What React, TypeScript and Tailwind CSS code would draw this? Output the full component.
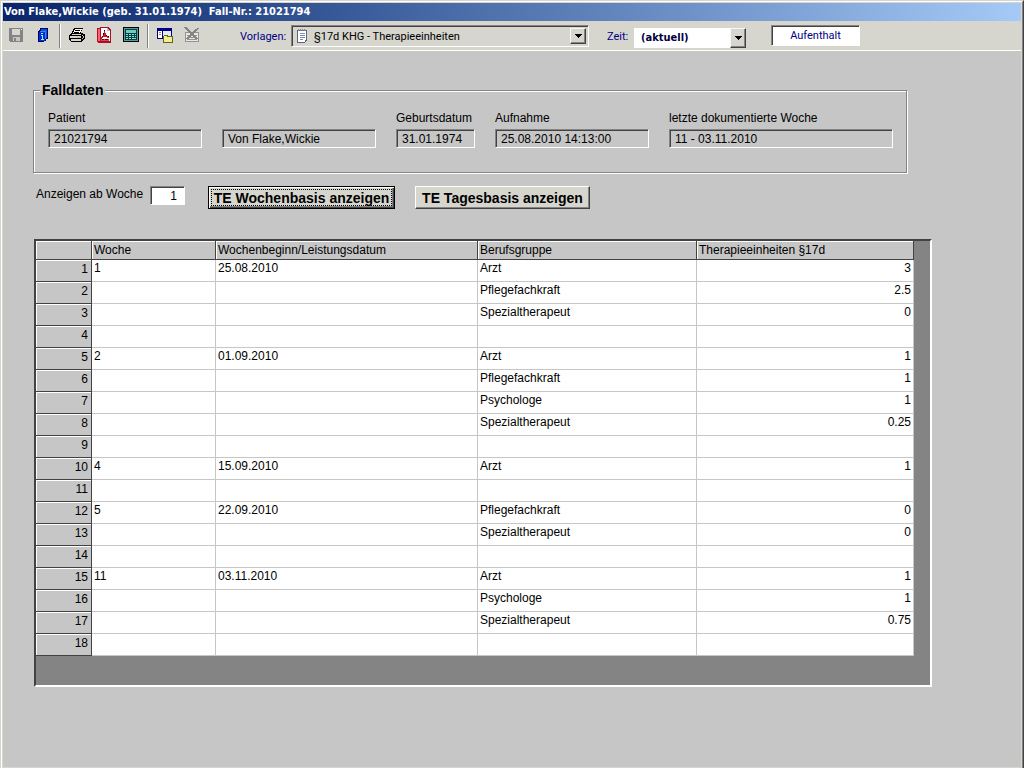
import React, { useState } from 'react';
import clsx from 'clsx';

interface TherapyRow {
  week?: string;
  date?: string;
  group?: string;
  units?: string;
}

const rows: TherapyRow[] = [
  { week: '1', date: '25.08.2010', group: 'Arzt', units: '3' },
  { group: 'Pflegefachkraft', units: '2.5' },
  { group: 'Spezialtherapeut', units: '0' },
  {},
  { week: '2', date: '01.09.2010', group: 'Arzt', units: '1' },
  { group: 'Pflegefachkraft', units: '1' },
  { group: 'Psychologe', units: '1' },
  { group: 'Spezialtherapeut', units: '0.25' },
  {},
  { week: '4', date: '15.09.2010', group: 'Arzt', units: '1' },
  {},
  { week: '5', date: '22.09.2010', group: 'Pflegefachkraft', units: '0' },
  { group: 'Spezialtherapeut', units: '0' },
  {},
  { week: '11', date: '03.11.2010', group: 'Arzt', units: '1' },
  { group: 'Psychologe', units: '1' },
  { group: 'Spezialtherapeut', units: '0.75' },
  {}
];

const Icon: React.FC<{ children: React.ReactNode }> = ({ children }) => (
  <svg viewBox="0 0 16 16" className="size-4" shapeRendering="crispEdges" aria-hidden="true">
    {children}
  </svg>
);

const SaveIcon = () => (
  <Icon>
    <path d="M1 1h14v14H2l-1-1z" fill="#848484" />
    <path d="M4 2h8v6H4z" fill="#d6d6ce" />
    <path d="M5 10h7v4H5z" fill="#c6c6c6" />
    <path d="M6 11h2v3H6z" fill="#848484" />
    <path d="M13 2h1v1h-1z" fill="#fff" />
  </Icon>
);

const InfoIcon = () => (
  <Icon>
    <path d="M5 1h8v11h-2v2H9v1H3V4h1V3h1z" fill="#000063" />
    <path d="M6 2h6v9h-1V4H6z" fill="#1052d6" />
    <path d="M4 5h6v9H4z" fill="#0031ce" />
    <path d="M5 4h6v8h-1V5H5z" fill="#2984ff" />
    <path d="M6 6h2v1H6zM7 8h1v4H7zM6 8h1v1H6zM6 12h3v1H6z" fill="#9ce7ff" />
  </Icon>
);

const PrintIcon = () => (
  <Icon>
    <path d="M5 1h9v1h-1v2h-1v2h2v1h2v5h-1v1h-1v1h-1v1H2v-1H1v-1H0V8h1V7h1V6h1V4h1V2h1z" fill="#000" />
    <path d="M6 2h7v1h-1v2h-1v1H4V5h1V3h1z" fill="#fff" />
    <path d="M6 3h5v1H6zM5 5h5v1H5z" fill="#000" />
    <path d="M3 7h9v1H2V8h1zM1 9h11v2H1zM2 12h10v2H2z" fill="#d6d6ce" />
    <path d="M13 8h1v1h-1zM14 9h1v2h-1zM13 11h1v1h-1z" fill="#c6c6c6" />
    <path d="M8 10h3v1H8z" fill="#c6c65a" />
  </Icon>
);

const PdfIcon = () => (
  <Icon>
    <path d="M1 1h3V0h8l3 3v13H2v-1H1z" fill="#ad1021" />
    <path d="M5 1h6v3h3v10H5z" fill="#fff" />
    <path d="M2 2h2v12H2z" fill="#ff6373" />
    <path d="M11 1l3 3h-3z" fill="#b5b5bd" />
    <path d="M8 3h1v3h1v2h1v1h2v2h-2v-1H7v1H6v1H5v-2h1V9h1V7h1z" fill="#ce1829" />
    <path d="M8 3h1v1H8zM7 6h1v2H7zM6 9h1v1H6zM10 8h1v1h-1zM12 9h1v1h-1z" fill="#31000a" />
    <path d="M5 12h8v2H5z" fill="#de4252" />
    <path d="M6 12h2v1H6zM9 12h3v1H9z" fill="#63000a" />
  </Icon>
);

const CalculatorIcon = () => (
  <Icon>
    <path d="M0 0h16v15H0z" fill="#000" />
    <path d="M1 1h14v13H1z" fill="#5a9c94" />
    <path d="M2 2h12v11H2z" fill="#00424a" />
    <path d="M3 3h10v3H3z" fill="#7bc6bd" />
    <path d="M3 7h2v1H3zM6 7h2v1H6zM9 7h2v1H9zM12 7h1v1h-1zM3 9h2v1H3zM6 9h2v1H6zM9 9h2v1H9zM12 9h1v1h-1zM3 11h2v1H3zM6 11h2v1H6zM9 11h4v1H9z" fill="#94dece" />
  </Icon>
);

const WindowIcon = () => (
  <Icon>
    <path d="M0 1h15v11H0z" fill="#000084" />
    <path d="M1 4h4v7H1z" fill="#fff" />
    <path d="M6 4h8v7H6z" fill="#e7e7f7" />
    <path d="M2 5h2v1H2zM2 7h2v1H2z" fill="#848484" />
    <path d="M6 9h1V8h4v1h5v7H6z" fill="#636321" />
    <path d="M7 9h3v1h5v5H7z" fill="#efef8c" />
  </Icon>
);

const DeleteFormIcon = () => (
  <Icon>
    <path d="M1 5h14v10H1z" fill="#949494" />
    <path d="M2 6h12v8H2z" fill="#e7e7de" />
    <path d="M3 8h10v1H3zM3 10h10v1H3zM3 12h10v1H3z" fill="#949494" />
    <path
      d="M0 0h3v1h1v1h1v1h1v1h1v1h2V4h1V3h1V2h2V1h2v1h-1v1h-1v1h-1v1h-1v1h-1v2h1v1h1v1h1v1h1v1h-3v-1h-1v-1H9V9H7v1H6v1H5v1H2v-1h1v-1h1V9h1V8h1V6H5V5H4V4H3V3H2V2H1V1H0z"
      fill="#848484"
    />
  </Icon>
);

const NoteIcon = () => (
  <svg viewBox="0 0 12 14" className="h-3.5 w-3" shapeRendering="crispEdges" aria-hidden="true">
    <path d="M1 1h10v11h-1v1H9v1H1z" fill="#63637b" />
    <path d="M2 2h8v9H9v2H2z" fill="#fff" />
    <path d="M4 4h5v1H4zM4 6h5v1H4zM4 8h5v1H4zM4 10h3v1H4z" fill="#7b8cad" />
    <path d="M2 0h1v2H2zM4 0h1v2H4zM6 0h1v2H6zM8 0h1v2H8z" fill="#84849c" />
  </svg>
);

const DropArrow = () => (
  <span className="pointer-events-none absolute inset-y-0 right-0 flex w-4 items-center justify-center border border-t-[#f7f7f7] border-l-[#f7f7f7] border-r-[#424242] border-b-[#424242] bg-[#d6d6ce] shadow-[inset_-1px_-1px_0_#848484]">
    <svg viewBox="0 0 7 4" className="h-1 w-[7px]" shapeRendering="crispEdges" aria-hidden="true">
      <path d="M0 0h7v1H6v1H5v1H4v1H3V3H2V2H1V1H0z" fill="#000" />
    </svg>
  </span>
);

const ToolButton: React.FC<{ label: string; disabled?: boolean; children: React.ReactNode }> = ({
  label,
  disabled,
  children
}) => (
  <button type="button" aria-label={label} title={label} disabled={disabled} className="pb-0.5">
    {children}
  </button>
);

const Separator = () => <span className="h-6 w-0.5 border-l border-l-[#848484] bg-white" />;

const sunken =
  'border border-t-[#848484] border-l-[#848484] border-r-white border-b-white shadow-[inset_1px_1px_0_#424242]';

interface FieldProps {
  id: string;
  label?: string;
  name?: string;
  value: string;
  className: string;
}

const Field: React.FC<FieldProps> = ({ id, label, name, value, className }) => (
  <div className={clsx('flex flex-col gap-1', className)}>
    {label && (
      <label htmlFor={id} className="whitespace-nowrap leading-[14px]">
        {label}
      </label>
    )}
    <input
      id={id}
      aria-label={name}
      readOnly
      value={value}
      className={clsx('h-[19px] w-full bg-[#c6c6c6] pl-[5px] outline-none', sunken)}
    />
  </div>
);

const headCell =
  'h-[19px] border-r border-b border-r-[#424242] border-b-[#424242] bg-[#c6c6c6] pl-0.5 text-left font-normal leading-4 shadow-[inset_1px_1px_0_#fff]';
const bodyCell = 'border-r border-b border-[#c6c6c6] bg-white px-0.5 align-top leading-4';

export default function App() {
  const [template, setTemplate] = useState('te');
  const [period, setPeriod] = useState('aktuell');
  const [fromWeek, setFromWeek] = useState('1');

  return (
    <div className="flex min-h-screen flex-col border border-t-[#d6d6ce] border-l-[#d6d6ce] border-r-[#424242] border-b-[#424242] font-['Liberation_Sans',Arial,sans-serif] text-xs text-black">
      <div className="flex flex-1 flex-col border border-t-white border-l-white border-r-[#848484] border-b-[#848484] bg-[#d6d6ce] p-px">
        {/* Title bar */}
        <header className="flex h-[18px] items-center bg-linear-to-r from-[#0a246a] to-[#a6caf7] pt-px pl-px">
          <h1 className="whitespace-pre font-['DejaVu_Sans_Condensed','DejaVu_Sans',sans-serif] text-[11px] font-bold text-white">
            {'Von Flake,Wickie (geb. 31.01.1974)  Fall-Nr.: 21021794'}
          </h1>
        </header>

        {/* Toolbar */}
        <div
          role="toolbar"
          className="flex h-[30px] items-center border-b border-white pl-[5px] font-[Roboto,sans-serif] text-[11px] text-[#000084]"
        >
          <div className="flex gap-[11px]">
            <ToolButton label="Speichern" disabled>
              <SaveIcon />
            </ToolButton>
            <ToolButton label="Info">
              <InfoIcon />
            </ToolButton>
          </div>
          <div className="ml-2 flex items-center gap-2">
            <Separator />
            <div className="flex gap-[11px]">
              <ToolButton label="Drucken">
                <PrintIcon />
              </ToolButton>
              <ToolButton label="PDF">
                <PdfIcon />
              </ToolButton>
              <ToolButton label="Rechner">
                <CalculatorIcon />
              </ToolButton>
            </div>
            <Separator />
            <div className="flex gap-[11px]">
              <ToolButton label="Fenster">
                <WindowIcon />
              </ToolButton>
              <ToolButton label="Formular löschen" disabled>
                <DeleteFormIcon />
              </ToolButton>
            </div>
          </div>

          <label htmlFor="template" className="ml-10 w-[51px] pt-1">
            Vorlagen:
          </label>
          <div className={clsx('relative h-[22px] w-[298px] p-0.5', sunken)}>
            <div className="relative flex h-full items-center pl-0.5">
              <NoteIcon />
              <select
                id="template"
                value={template}
                onChange={(e) => setTemplate(e.target.value)}
                className="h-full flex-1 appearance-none pt-0.5 pl-1.5 text-black outline-none"
              >
                <option value="te">§17d KHG - Therapieeinheiten</option>
              </select>
              <DropArrow />
            </div>
          </div>

          <label htmlFor="period" className="ml-[18px] w-[27px] pt-1">
            Zeit:
          </label>
          <div className="relative mt-1 h-5 w-28">
            <select
              id="period"
              value={period}
              onChange={(e) => setPeriod(e.target.value)}
              className="h-full w-full appearance-none bg-white pt-0.5 pl-[7px] font-['DejaVu_Sans_Condensed','DejaVu_Sans',sans-serif] font-bold text-[#000042] outline-none"
            >
              <option value="aktuell">(aktuell)</option>
            </select>
            <DropArrow />
          </div>

          <button type="button" className={clsx('ml-[25px] h-[21px] w-[89px] bg-white pt-0.5', sunken)}>
            Aufenthalt
          </button>
        </div>

        <main className="flex-1 bg-[#c6c6c6] pt-[31px] pr-[89px] pb-20 pl-[30px]">
          <fieldset className="mr-[25px] border border-[#848484] pr-[13px] pb-6 pl-3.5 shadow-[1px_1px_0_#fff,inset_1px_1px_0_#fff]">
            <legend className="-ml-2 bg-[#c6c6c6] px-0.5 text-sm leading-4 font-bold">Falldaten</legend>
            <div className="flex items-end gap-5 pt-[13px]">
              <Field id="patient" label="Patient" value="21021794" className="w-[154px]" />
              <Field id="name" name="Name" value="Von Flake,Wickie" className="w-[154px]" />
              <Field id="birth" label="Geburtsdatum" value="31.01.1974" className="w-[79px]" />
              <Field id="admission" label="Aufnahme" value="25.08.2010 14:13:00" className="w-[154px]" />
              <Field
                id="last"
                label="letzte dokumentierte Woche"
                value="11 - 03.11.2010"
                className="flex-1"
              />
            </div>
          </fieldset>

          <div className="flex items-start pt-[13px] pl-[3px]">
            <label htmlFor="from-week" className="w-[114px] leading-[17px]">
              Anzeigen ab Woche
            </label>
            <input
              id="from-week"
              value={fromWeek}
              onChange={(e) => setFromWeek(e.target.value)}
              className={clsx('h-[19px] w-[35px] bg-white pr-[7px] text-right outline-none', sunken)}
            />
            <button
              type="button"
              className="ml-[23px] h-[23px] w-[187px] border border-black bg-[#d6d6ce] p-0.5 text-sm font-bold whitespace-nowrap shadow-[inset_1px_1px_0_#fff,inset_-1px_-1px_0_#424242,inset_-2px_-2px_0_#848484]"
            >
              <span className="flex h-full items-center justify-center border border-dotted border-black">
                TE Wochenbasis anzeigen
              </span>
            </button>
            <button
              type="button"
              className="ml-5 h-[23px] w-[175px] border border-t-white border-l-white border-r-[#424242] border-b-[#424242] bg-[#d6d6ce] text-sm leading-5 font-bold whitespace-nowrap shadow-[inset_-1px_-1px_0_#848484]"
            >
              TE Tagesbasis anzeigen
            </button>
          </div>

          {/* Therapy units grid */}
          <div className="mt-[30px] ml-px border-2 border-t-[#424242] border-l-[#424242] border-r-white border-b-white bg-[#848484] pr-4 pb-[29px]">
            <table className="w-full table-fixed border-separate border-spacing-0">
              <colgroup>
                <col className="w-14" />
                <col className="w-[124px]" />
                <col className="w-[262px]" />
                <col className="w-[219px]" />
                <col />
              </colgroup>
              <thead>
                <tr>
                  <th className={headCell} aria-label="Zeile" />
                  <th className={headCell}>Woche</th>
                  <th className={headCell}>Wochenbeginn/Leistungsdatum</th>
                  <th className={headCell}>Berufsgruppe</th>
                  <th className={headCell}>Therapieeinheiten §17d</th>
                </tr>
              </thead>
              <tbody>
                {rows.map((row, index) => (
                  <tr key={index} className="h-[22px]">
                    <th
                      scope="row"
                      className="border-r border-b border-[#424242] bg-[#c6c6c6] pr-[3px] text-right align-top leading-[18px] font-normal shadow-[inset_1px_1px_0_#fff]"
                    >
                      {index + 1}
                    </th>
                    <td className={bodyCell}>{row.week}</td>
                    <td className={bodyCell}>{row.date}</td>
                    <td className={bodyCell}>{row.group}</td>
                    <td className={clsx(bodyCell, 'text-right')}>{row.units}</td>
                  </tr>
                ))}
              </tbody>
            </table>
          </div>
        </main>
      </div>
    </div>
  );
}
